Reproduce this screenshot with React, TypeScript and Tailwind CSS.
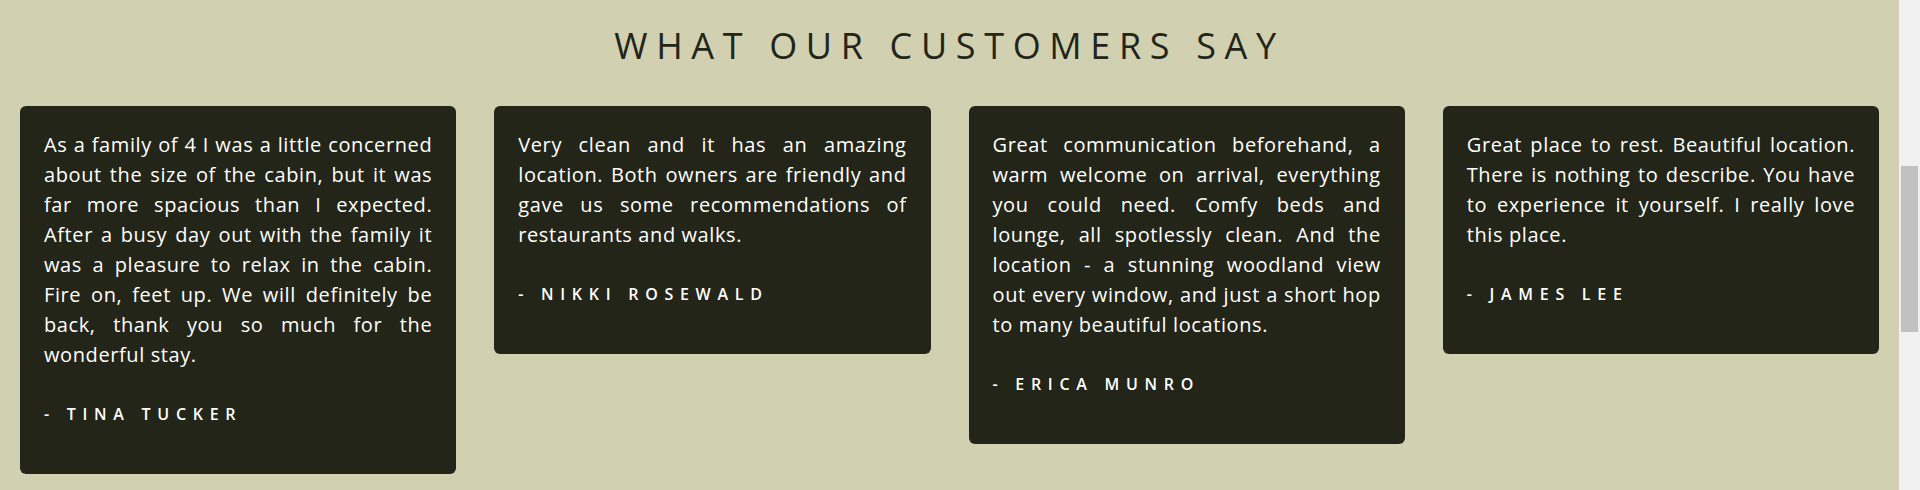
const reviews = [
  {
    text: 'As a family of 4 I was a little concerned about the size of the cabin, but it was far more spacious than I expected. After a busy day out with the family it was a pleasure to relax in the cabin. Fire on, feet up. We will definitely be back, thank you so much for the wonderful stay.',
    author: 'Tina Tucker',
  },
  {
    text: 'Very clean and it has an amazing location. Both owners are friendly and gave us some recommendations of restaurants and walks.',
    author: 'Nikki Rosewald',
  },
  {
    text: 'Great communication beforehand, a warm welcome on arrival, everything you could need. Comfy beds and lounge, all spotlessly clean. And the location - a stunning woodland view out every window, and just a short hop to many beautiful locations.',
    author: 'Erica Munro',
  },
  {
    text: 'Great place to rest. Beautiful location. There is nothing to describe. You have to experience it yourself. I really love this place.',
    author: 'James Lee',
  },
];

export default function App() {
  return (
    <div className="flex h-[490px] w-[1920px] overflow-hidden font-['Open_Sans',sans-serif]">
      <main className="h-full flex-1 bg-[#d1d1b1] px-5 pt-6">
        {/* Heading */}
        <h2 className="mb-[39px] text-center text-[36px] leading-[1.2] font-normal uppercase tracking-[0.24em] text-[#232518]">
          What our customers say
        </h2>

        {/* Reviews */}
        <div className="grid grid-cols-4 items-start gap-[38px]">
          {reviews.map((r) => (
            <div key={r.author} className="rounded-md bg-[#232518] px-6 pt-6 pb-[48px] text-white">
              <p className="text-justify text-[20px] leading-[30px] tracking-[0.03em]">{r.text}</p>
              <p className="mt-[32px] text-[16px] leading-6 font-semibold uppercase tracking-[0.42em]">
                - {r.author}
              </p>
            </div>
          ))}
        </div>
      </main>

      {/* Scrollbar */}
      <div className="h-full w-[21px] bg-[#f1f1f1] pt-[166px] pl-[2px] pr-[2px]">
        <div className="h-[166px] w-full bg-[#c1c1c1]" />
      </div>
    </div>
  );
}
